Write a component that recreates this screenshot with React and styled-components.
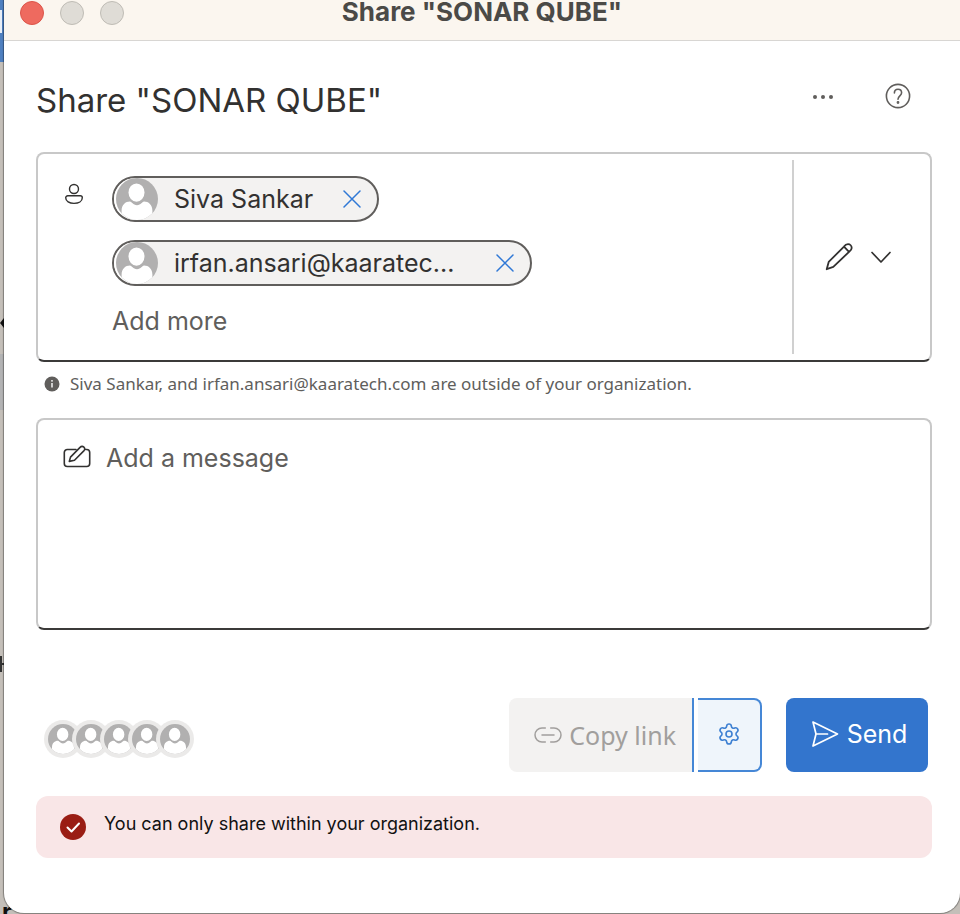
import React from "react";
import styled, { createGlobalStyle } from "styled-components";
import { Settings } from "lucide-react";

const GlobalStyle = createGlobalStyle`
  *, *::before, *::after { box-sizing: border-box; }
  body {
    margin: 0;
    background: #c4bfb9;
    font-family: Inter, "Liberation Sans", sans-serif;
    color: #323130;
  }
  button, input, textarea { font: inherit; color: inherit; }
  svg { display: block; flex: none; }
`;

const Desktop = styled.div`
  position: relative;
  min-height: 100vh;
  display: flex;
  overflow: hidden;
`;

/* The page that shows behind the left edge of the window */
const Backdrop = styled.div`
  position: absolute;
  inset: 0 auto 0 0;
  width: 16px;
  display: flex;
  flex-direction: column;
`;

const Strip = styled.div`
  height: ${(p) => p.$height}px;
  flex: none;
  background: ${(p) => p.$color || "transparent"};
`;

const BlueStrip = styled(Strip)`
  padding-top: 10px;

  &::before {
    content: "";
    display: block;
    width: 2px;
    height: 23px;
    background: #e8eef6;
  }
`;

const Letter = styled.div`
  height: 24px;
  flex: none;
  padding-left: 2px;
  color: #111;
  font-size: 24px;
  line-height: 24px;
  font-weight: 700;
`;

const Window = styled.main`
  position: relative;
  flex: 1;
  min-width: 0;
  margin: 0 0 1px 4px;
  background: #fff;
  border-radius: 0 0 20px 20px;
  box-shadow: 0 0 1px 1px rgba(0, 0, 0, 0.35);
  overflow: hidden;
`;

const TitleBar = styled.header`
  display: grid;
  grid-template-columns: 1fr auto 1fr;
  align-items: center;
  height: 41px;
  padding: 0 16px 17px;
  background: #fbf6ef;
  border-bottom: 1px solid #d8d6d3;
`;

const Lights = styled.div`
  display: flex;
  gap: 16px;
`;

const Light = styled.button`
  width: 24px;
  height: 24px;
  padding: 0;
  border: 1px solid ${(p) => (p.$close ? "#dc5449" : "#bfbcb5")};
  border-radius: 50%;
  background: ${(p) => (p.$close ? "#ee6a5f" : "#dfdcd6")};
`;

const WindowTitle = styled.div`
  padding-bottom: 2px;
  font-size: 26px;
  line-height: 24px;
  font-weight: 700;
  color: #4b4a47;
  white-space: nowrap;
`;

const Content = styled.form`
  padding: 39px 28px 55px 32px;
`;

const HeadingRow = styled.div`
  display: flex;
  align-items: center;
  gap: 48px;
  height: 40px;
  margin-bottom: 32px;
  padding-right: 20px;
`;

const Heading = styled.h1`
  flex: 1;
  margin: 0;
  font-size: 33px;
  line-height: 40px;
  font-weight: 400;
  white-space: nowrap;
`;

const IconButton = styled.button`
  display: flex;
  align-items: center;
  justify-content: center;
  padding: 0;
  border: 0;
  background: none;
  color: ${(p) => p.$color || "#605e5c"};
`;

const HeadingIcon = styled(IconButton)`
  height: 32px;
  margin-bottom: 8px;
`;

const Field = styled.div`
  display: flex;
  border: 2px solid #c8c8c8;
  border-bottom-color: #3b3a39;
  border-radius: 8px;
`;

const People = styled.div`
  flex: 1;
  min-width: 0;
  display: flex;
  gap: 28px;
  padding: 22px 26px;
`;

const PersonMark = styled.div`
  padding-top: 6px;
`;

const Chips = styled.div`
  flex: 1;
  min-width: 0;
  display: flex;
  flex-direction: column;
  align-items: flex-start;
  gap: 18px;
`;

const Chip = styled.div`
  display: flex;
  align-items: center;
  height: 46px;
  max-width: 100%;
  padding-right: 16px;
  border: 2px solid #605e5c;
  border-radius: 23px;
  background: #f3f2f1;
`;

const ChipName = styled.span`
  min-width: ${(p) => (p.$long ? "292px" : "0")};
  margin: 0 30px 0 16px;
  font-size: 25px;
  line-height: 32px;
  white-space: nowrap;
`;

const Face = styled.svg`
  width: ${(p) => p.$size}px;
  height: ${(p) => p.$size}px;
  border-radius: 50%;
  background: #b1b0b0;
`;

const ChipFace = styled.span`
  border-left: 2px solid #fff;
  border-radius: 50%;
`;

const AddMore = styled.input`
  width: 100%;
  height: 34px;
  padding: 0;
  border: 0;
  outline: 0;
  background: none;
  font-size: 25px;
  line-height: 32px;

  &::placeholder { color: #605e5c; opacity: 1; }
`;

const Permission = styled.button`
  display: flex;
  align-items: center;
  gap: 18px;
  width: 138px;
  margin: 6px 0;
  padding: 0 0 0 31px;
  border: 0;
  border-left: 2px solid #d0d0d0;
  background: none;
`;

const Note = styled.p`
  display: flex;
  align-items: center;
  gap: 10px;
  margin: 10px 0 22px;
  padding-left: 8px;
  font-family: "Noto Sans", sans-serif;
  font-size: 17px;
  line-height: 24px;
  color: #605e5c;
`;

const MessageField = styled(Field)`
  gap: 15px;
  height: 212px;
  padding: 22px 25px;
`;

const MessageIcon = styled.div`
  padding-top: 3px;
`;

const Message = styled.textarea`
  flex: 1;
  min-width: 0;
  padding: 0;
  border: 0;
  outline: 0;
  resize: none;
  background: none;
  font-size: 25px;
  line-height: 32px;

  &::placeholder { color: #605e5c; opacity: 1; }
`;

const Actions = styled.div`
  display: flex;
  align-items: center;
  gap: 24px;
  margin: 68px 0 24px;
  padding: 0 4px 0 8px;
`;

const Faces = styled.div`
  flex: 1;
  display: flex;
  padding-top: 8px;
`;

const FaceRing = styled.span`
  flex: none;
  padding: 4px;
  border-radius: 50%;
  background: #ebeae9;

  & + & { margin-left: -10px; }
`;

const Split = styled.div`
  display: flex;
  gap: 4px;
  height: 74px;
`;

const CopyButton = styled.button`
  display: flex;
  align-items: center;
  gap: 7px;
  padding: 0 16px 0 25px;
  border: 0;
  border-right: 2px solid #4587d6;
  border-radius: 8px 0 0 8px;
  background: #f3f2f1;
  color: #a19f9d;
  font-family: "Noto Sans", sans-serif;
  font-size: 25px;
  line-height: 32px;
  white-space: nowrap;
`;

const SettingsButton = styled.button`
  display: flex;
  align-items: center;
  justify-content: center;
  width: 64px;
  padding: 0 0 2px;
  border: 2px solid #4587d6;
  border-left: 0;
  border-radius: 0 8px 8px 0;
  background: #eff5fb;
  color: #3e80d2;
`;

const SendButton = styled.button`
  display: flex;
  align-items: center;
  justify-content: center;
  gap: 8px;
  min-width: 142px;
  height: 74px;
  padding: 0 20px 2px 24px;
  border: 0;
  border-radius: 8px;
  background: #3375cd;
  color: #fff;
  font-size: 25px;
  line-height: 32px;
`;

const Alert = styled.div`
  display: flex;
  align-items: center;
  gap: 18px;
  min-height: 62px;
  padding: 0 24px;
  border-radius: 12px;
  background: #f9e6e7;
  color: #111;
  font-size: 18px;
  line-height: 24px;
`;

const AlertText = styled.span`
  padding-bottom: 6px;
`;

const Avatar = ({ size }) => (
  <Face $size={size} viewBox="0 0 42 42" aria-hidden="true">
    <path
      d="M5.600 42V32.500C5.600 27 9.400 23.600 14 23.600c1.600 0 3 3.600 7 3.600s5.400-3.600 7-3.600c4.600 0 8.400 3.400 8.400 8.900V42z"
      fill="#fff"
    />
    <ellipse cx="20.500" cy="15" rx="9.600" ry="10.600" fill="#b1b0b0" />
    <ellipse cx="20.500" cy="14.600" rx="8" ry="9.200" fill="#fff" />
  </Face>
);

const Line = ({ w, h, sw = 1.7, children }) => (
  <svg
    width={w}
    height={h}
    viewBox={`0 0 ${w} ${h}`}
    fill="none"
    stroke="currentColor"
    strokeWidth={sw}
    strokeLinejoin="round"
    strokeLinecap="round"
    aria-hidden="true"
  >
    {children}
  </svg>
);

const people = [
  { name: "Siva Sankar" },
  { name: "irfan.ansari@kaaratec...", long: true },
];

export default function App() {
  return (
    <>
      <GlobalStyle />
      <Desktop>
        <Backdrop aria-hidden="true">
          <BlueStrip $height={62} $color="#4f80c0" />
          <Strip $height={254} />
          <svg width="4" height="14" viewBox="0 0 4 14">
            <path d="M4 2v10L0 7z" fill="#111" />
          </svg>
          <Strip $height={24} />
          <Strip $height={56} $color="#b3b3b4" />
          <Strip $height={246} />
          <svg width="4" height="16" viewBox="0 0 4 16">
            <path d="M1 0v16M1 8h3" stroke="#333" strokeWidth="2" />
          </svg>
          <Strip $height={228} />
          <Letter>r</Letter>
        </Backdrop>

        <Window>
          <TitleBar>
            <Lights>
              <Light $close type="button" aria-label="Close" />
              <Light type="button" aria-label="Minimize" />
              <Light type="button" aria-label="Zoom" />
            </Lights>
            <WindowTitle>Share "SONAR QUBE"</WindowTitle>
          </TitleBar>

          <Content onSubmit={(e) => e.preventDefault()}>
            <HeadingRow>
              <Heading>Share "SONAR QUBE"</Heading>
              <HeadingIcon type="button" aria-label="More options">
                <svg width="28" height="8" viewBox="0 0 28 8" fill="currentColor">
                  <circle cx="7" cy="5" r="2" />
                  <circle cx="15" cy="5" r="2" />
                  <circle cx="23" cy="5" r="2" />
                </svg>
              </HeadingIcon>
              <HeadingIcon type="button" aria-label="Help">
                <Line w={28} h={28} sw={1.6}>
                  <circle cx="14" cy="14" r="11.600" />
                  <path d="M10.400 11c0-2.300 1.500-3.800 3.600-3.800s3.600 1.500 3.600 3.500c0 3-3.600 3.400-3.600 6.600" />
                  <circle cx="14" cy="20.500" r=".6" fill="currentColor" />
                </Line>
              </HeadingIcon>
            </HeadingRow>

            <Field>
              <People>
                <PersonMark>
                  <Line w={20} h={24} sw={1.4}>
                    <circle cx="10" cy="7" r="4.500" />
                    <path d="M3.700 13.800h12.600a2 2 0 0 1 2 2c0 3.600-3.700 5.600-8.300 5.600s-8.300-2-8.300-5.600a2 2 0 0 1 2-2z" />
                  </Line>
                </PersonMark>
                <Chips>
                  {people.map(({ name, long }) => (
                    <Chip key={name}>
                      <ChipFace>
                        <Avatar size={42} />
                      </ChipFace>
                      <ChipName $long={long}>{name}</ChipName>
                      <IconButton type="button" $color="#2f78d6" aria-label={`Remove ${name}`}>
                        <Line w={18} h={18} sw={1.5}>
                          <path d="M1 1l16 16M17 1L1 17" />
                        </Line>
                      </IconButton>
                    </Chip>
                  ))}
                  <AddMore placeholder="Add more" aria-label="Add more people" />
                </Chips>
              </People>
              <Permission type="button" aria-label="Can edit" aria-haspopup="menu">
                <Line w={28} h={28} sw={1.8}>
                  <path d="M3.700 18.900L19 3.600c1-1.500 2.500-2.400 4-2.400 2.100 0 3.700 1.800 3.700 3.900 0 1.500-1.200 2.800-2.700 3.800L8.300 23.900l-6.600 2.300zM19 3.600l5 5.300" />
                </Line>
                <Line w={20} h={12} sw={1.7}>
                  <path d="M1 1.500l9 9.500 9-9.500" />
                </Line>
              </Permission>
            </Field>

            <Note>
              <svg width="16" height="16" viewBox="0 0 16 16" aria-hidden="true">
                <circle cx="8" cy="8" r="7.500" fill="#605e5c" />
                <circle cx="8" cy="4.800" r=".9" fill="#fff" />
                <path d="M8 7v4.500" stroke="#fff" strokeWidth="1.400" />
              </svg>
              Siva Sankar, and irfan.ansari@kaaratech.com are outside of your organization.
            </Note>

            <MessageField as="label">
              <MessageIcon>
                <Line w={28} h={24} sw={1.6}>
                  <path d="M13 4.500H4.300a3 3 0 0 0-3 3v11a3 3 0 0 0 3 3h19.400a3 3 0 0 0 3-3v-11a3 3 0 0 0-3-3h-1" />
                  <path d="M6.300 16.400l1.200-4.300L16.800 2.600c1.200-1.200 2.600-1.600 4-.6 1.300 1.200 1.100 2.700 0 3.900l-9.300 9.300z" />
                </Line>
              </MessageIcon>
              <Message placeholder="Add a message" aria-label="Add a message" />
            </MessageField>

            <Actions>
              <Faces>
                {[1, 2, 3, 4, 5].map((n) => (
                  <FaceRing key={n}>
                    <Avatar size={30} />
                  </FaceRing>
                ))}
              </Faces>
              <Split>
                <CopyButton type="button">
                  <Line w={28} h={16} sw={1.5}>
                    <path d="M11.300 1H8a7 7 0 0 0 0 14h3.300M16.700 1H20a7 7 0 0 1 0 14h-3.300M8 8h12" />
                  </Line>
                  Copy link
                </CopyButton>
                <SettingsButton type="button" aria-label="Link settings">
                  <Settings size={24} strokeWidth={1.6} />
                </SettingsButton>
              </Split>
              <SendButton type="submit">
                <Line w={28} h={26} sw={1.7}>
                  <path d="M2 1l24.500 12L2 25l3-12zM5 13h11.500" />
                </Line>
                Send
              </SendButton>
            </Actions>

            <Alert role="alert">
              <svg width="26" height="26" viewBox="0 0 26 26" aria-hidden="true">
                <circle cx="13" cy="13" r="13" fill="#9a1d14" />
                <path
                  d="M7.500 13.500l4 4L19 9.500"
                  fill="none"
                  stroke="#fff"
                  strokeWidth="2"
                  strokeLinecap="round"
                  strokeLinejoin="round"
                />
              </svg>
              <AlertText>You can only share within your organization.</AlertText>
            </Alert>
          </Content>
        </Window>
      </Desktop>
    </>
  );
}
